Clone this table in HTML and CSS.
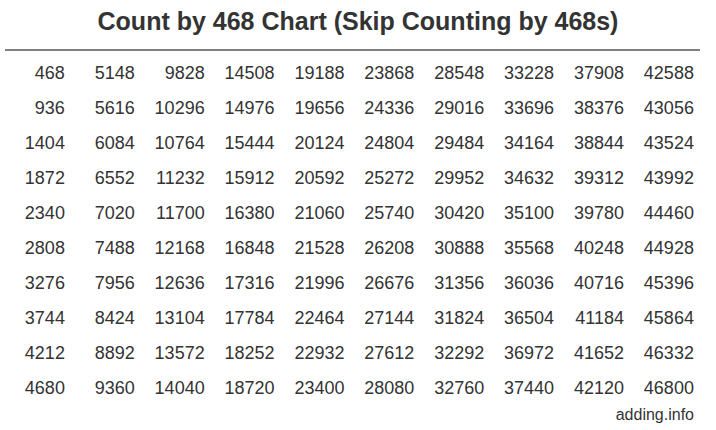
FILE: index.html
```html
<!DOCTYPE html>
<html>
<head>
<meta charset="utf-8">
<title>Count by 468 Chart</title>
<link rel="stylesheet" href="styles.css">
</head>
<body>
<div class="page">
  <h1 class="title">Count by 468 Chart (Skip Counting by 468s)</h1>
  <div class="rule"></div>
  <div class="grid">
    <span>468</span><span>5148</span><span>9828</span><span>14508</span><span>19188</span><span>23868</span><span>28548</span><span>33228</span><span>37908</span><span>42588</span>
    <span>936</span><span>5616</span><span>10296</span><span>14976</span><span>19656</span><span>24336</span><span>29016</span><span>33696</span><span>38376</span><span>43056</span>
    <span>1404</span><span>6084</span><span>10764</span><span>15444</span><span>20124</span><span>24804</span><span>29484</span><span>34164</span><span>38844</span><span>43524</span>
    <span>1872</span><span>6552</span><span>11232</span><span>15912</span><span>20592</span><span>25272</span><span>29952</span><span>34632</span><span>39312</span><span>43992</span>
    <span>2340</span><span>7020</span><span>11700</span><span>16380</span><span>21060</span><span>25740</span><span>30420</span><span>35100</span><span>39780</span><span>44460</span>
    <span>2808</span><span>7488</span><span>12168</span><span>16848</span><span>21528</span><span>26208</span><span>30888</span><span>35568</span><span>40248</span><span>44928</span>
    <span>3276</span><span>7956</span><span>12636</span><span>17316</span><span>21996</span><span>26676</span><span>31356</span><span>36036</span><span>40716</span><span>45396</span>
    <span>3744</span><span>8424</span><span>13104</span><span>17784</span><span>22464</span><span>27144</span><span>31824</span><span>36504</span><span>41184</span><span>45864</span>
    <span>4212</span><span>8892</span><span>13572</span><span>18252</span><span>22932</span><span>27612</span><span>32292</span><span>36972</span><span>41652</span><span>46332</span>
    <span>4680</span><span>9360</span><span>14040</span><span>18720</span><span>23400</span><span>28080</span><span>32760</span><span>37440</span><span>42120</span><span>46800</span>
  </div>
  <div class="credit">adding.info</div>
</div>
</body>
</html>
```
FILE: styles.css
```css
html, body {
  margin: 0;
  padding: 0;
  background: #ffffff;
}
.page {
  width: 716px;
  height: 430px;
  font-family: "Liberation Sans", Arial, sans-serif;
  color: #333333;
  overflow: hidden;
}
.title {
  margin: 6px 0 0 0;
  font-size: 25px;
  line-height: 30px;
  font-weight: bold;
  text-align: center;
  color: #333333;
}
.rule {
  margin: 13px 0 0 5px;
  width: 695px;
  height: 2px;
  background: #808080;
}
.grid {
  margin: 5px 0 0 5px;
  display: grid;
  grid-template-columns: repeat(10, 69.9px);
  grid-auto-rows: 35px;
  font-size: 18px;
  line-height: 35px;
}
.grid span {
  text-align: right;
  padding-right: 10px;
}
.credit {
  text-align: right;
  padding-right: 22px;
  font-size: 16px;
  line-height: 18px;
}
```
